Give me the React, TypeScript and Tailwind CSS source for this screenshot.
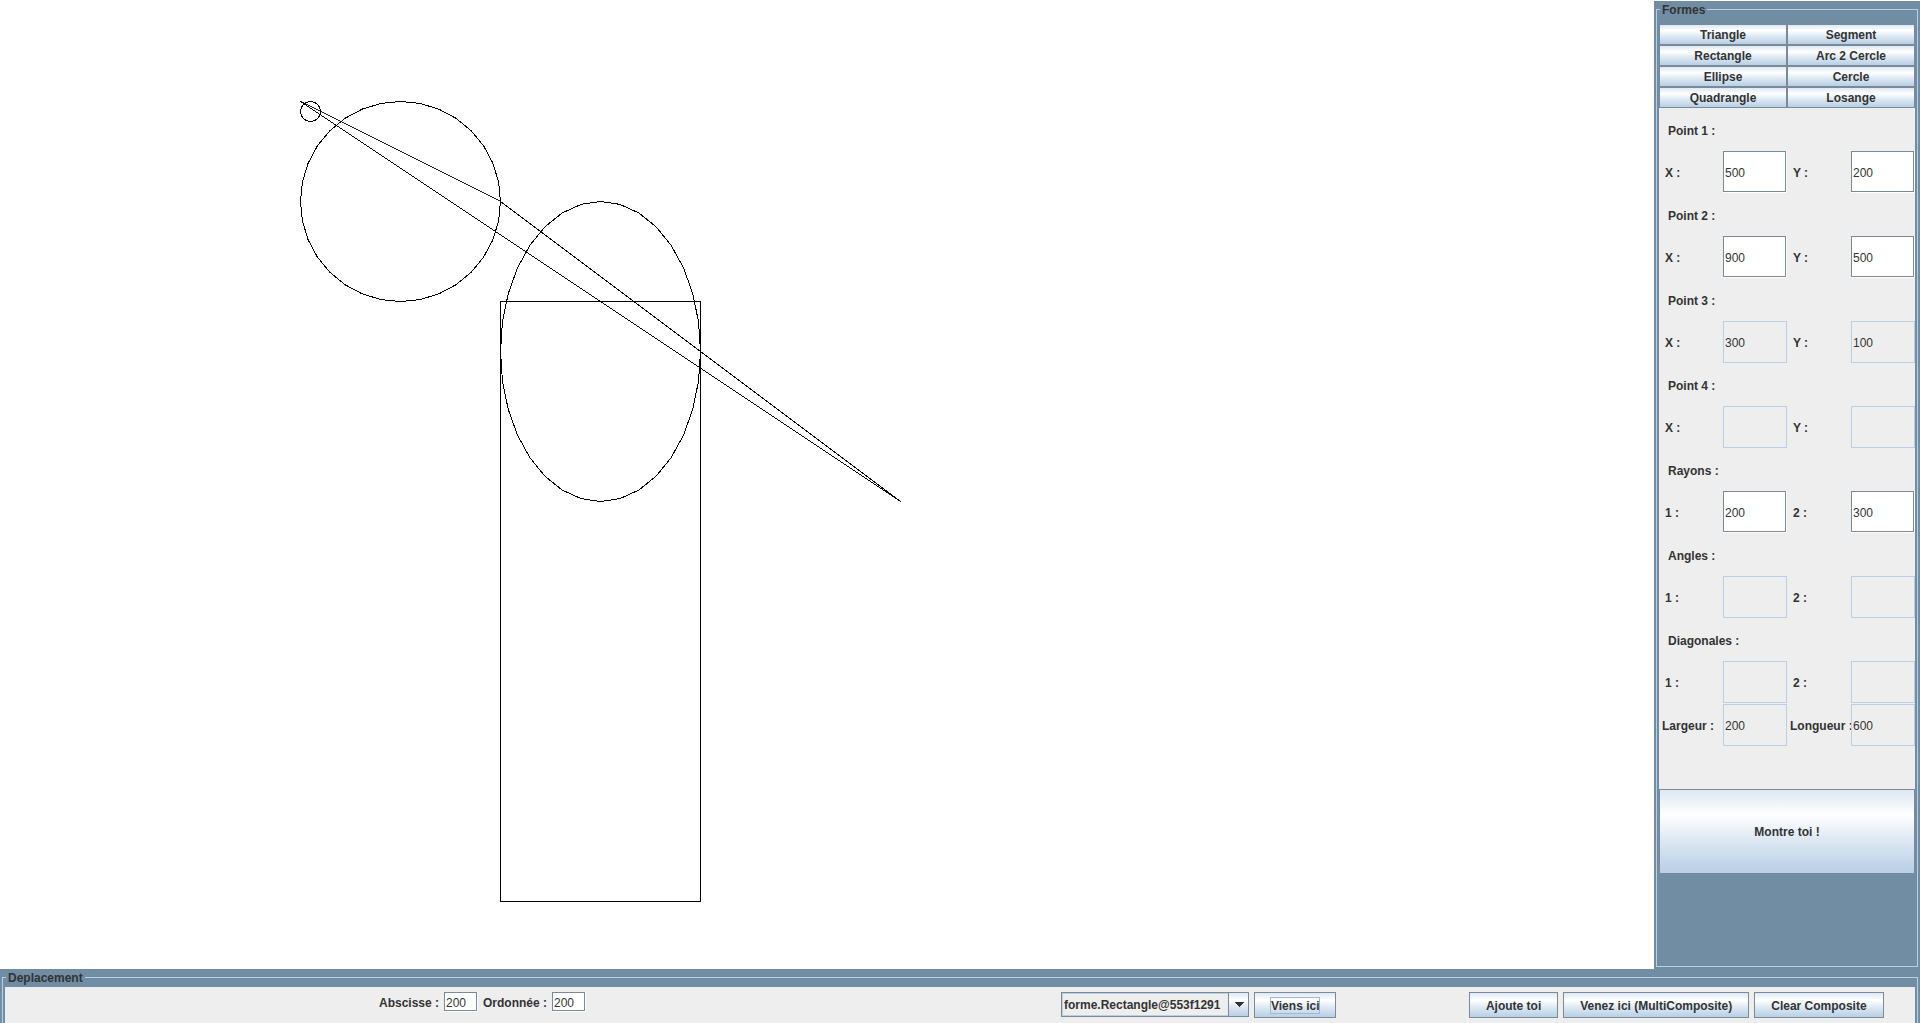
import { useId } from "react";
import type { ReactNode } from "react";

const METAL =
  "border border-[#7a8a99] bg-[linear-gradient(to_bottom,#dde8f3_0%,#ffffff_30%,#dde8f3_60%,#b8cfe5_100%)]";

const SHAPES = [
  "Triangle",
  "Segment",
  "Rectangle",
  "Arc 2 Cercle",
  "Ellipse",
  "Cercle",
  "Quadrangle",
  "Losange",
];

type FieldData = { label: string; value: string; disabled?: boolean };

const SECTIONS: { title: string; fields: FieldData[] }[] = [
  { title: "Point 1 :", fields: [{ label: "X :", value: "500" }, { label: "Y :", value: "200" }] },
  { title: "Point 2 :", fields: [{ label: "X :", value: "900" }, { label: "Y :", value: "500" }] },
  {
    title: "Point 3 :",
    fields: [
      { label: "X :", value: "300", disabled: true },
      { label: "Y :", value: "100", disabled: true },
    ],
  },
  {
    title: "Point 4 :",
    fields: [
      { label: "X :", value: "", disabled: true },
      { label: "Y :", value: "", disabled: true },
    ],
  },
  { title: "Rayons :", fields: [{ label: "1 :", value: "200" }, { label: "2 :", value: "300" }] },
  {
    title: "Angles :",
    fields: [
      { label: "1 :", value: "", disabled: true },
      { label: "2 :", value: "", disabled: true },
    ],
  },
  {
    title: "Diagonales :",
    fields: [
      { label: "1 :", value: "", disabled: true },
      { label: "2 :", value: "", disabled: true },
    ],
  },
];

// Flattens an ellipse into eight straight segments per quarter.
function ellipsePoints(x: number, y: number, w: number, h: number) {
  const steps = 32;
  return Array.from({ length: steps }, (_, i) => {
    const a = (i / steps) * Math.PI * 2;
    const px = x + w / 2 + (w / 2) * Math.cos(a);
    const py = y + h / 2 + (h / 2) * Math.sin(a);
    return `${px.toFixed(2)},${py.toFixed(2)}`;
  }).join(" ");
}

function TextBox({ id, value, disabled, size }: { id: string; value: string; disabled?: boolean; size: string }) {
  if (disabled) {
    return (
      <input
        id={id}
        type="text"
        disabled
        defaultValue={value}
        className={`${size} border border-[#b8cfe5] bg-transparent pt-[2px] pl-px text-[#333333]`}
      />
    );
  }
  return (
    <div className={`${size} flex border-r border-b border-white`}>
      <input
        id={id}
        type="text"
        defaultValue={value}
        className="w-full min-w-0 border border-[#7a8a99] bg-white pt-[2px] pl-px outline-none"
      />
    </div>
  );
}

function FieldRow({ fields, labelPad }: { fields: FieldData[]; labelPad: string }) {
  const base = useId();
  return (
    <div className="grid h-[42px] grid-cols-4 items-center">
      {fields.map((f, i) => (
        <div key={f.label} className="col-span-2 grid grid-cols-2 items-center">
          <label htmlFor={`${base}-${i}`} className={`${labelPad} pt-[2px] font-bold whitespace-nowrap`}>
            {f.label}
          </label>
          <TextBox id={`${base}-${i}`} value={f.value} disabled={f.disabled} size="h-[42px] w-full" />
        </div>
      ))}
    </div>
  );
}

function BarButton({ children, focused }: { children: ReactNode; focused?: boolean }) {
  return (
    <button type="button" className={`${METAL} flex h-[26px] items-center px-[15px] font-bold whitespace-nowrap`}>
      <span className={focused ? "border border-[#a3b8cc] pt-px" : "border border-transparent pt-px"}>
        {children}
      </span>
    </button>
  );
}

function Drawing() {
  return (
    <svg
      className="block h-full w-full"
      fill="none"
      stroke="#000000"
      strokeWidth="1"
      shapeRendering="crispEdges"
      role="img"
      aria-label="Dessin"
    >
      <g transform="translate(0.5 0.5)">
        <polygon points={ellipsePoints(300, 100, 200, 200)} />
        <ellipse cx="310" cy="110" rx="10" ry="10" />
        <polygon points={ellipsePoints(500, 200, 200, 300)} />
        <rect x="500" y="300" width="200" height="600" />
        <polyline points="500,200 900,500 300,100" />
        <line x1="300" y1="100" x2="500" y2="200" strokeWidth="0.88" />
      </g>
    </svg>
  );
}

function ShapePanel() {
  return (
    <aside className="flex w-[266px] shrink-0 flex-col bg-[#708da3] px-[2px] pb-[2px]">
      <fieldset className="flex-1 border border-[#b8cfe5] px-[2px] pt-[7px]">
        <legend className="ml-px px-[2px] pt-[2px] font-bold">Formes</legend>
        <div className="grid grid-cols-2">
          {SHAPES.map((s) => (
            <button key={s} type="button" className={`${METAL} h-[21px] font-bold`}>
              {s}
            </button>
          ))}
        </div>
        <div className="bg-[#eeeeee] pb-[43px]">
          {SECTIONS.map((s) => (
            <section key={s.title}>
              <h2 className="flex h-[43px] items-center pt-[2px] pl-[9px] font-bold">{s.title}</h2>
              <FieldRow fields={s.fields} labelPad="pl-[6px]" />
            </section>
          ))}
          <div className="pt-px">
            <FieldRow
              labelPad="pl-[3px]"
              fields={[
                { label: "Largeur :", value: "200", disabled: true },
                { label: "Longueur :", value: "600", disabled: true },
              ]}
            />
          </div>
        </div>
        <button type="button" className={`${METAL} h-[85px] w-full font-bold`}>
          Montre toi !
        </button>
      </fieldset>
    </aside>
  );
}

function MoveBar() {
  return (
    <footer className="shrink-0 bg-[#708da3] px-[2px]">
      <fieldset className="border border-b-0 border-[#b8cfe5] px-[2px] pt-[2px]">
        <legend className="ml-px px-[2px] pt-[2px] font-bold">Deplacement</legend>
        <div className="grid grid-cols-[2fr_1fr_1fr] items-start bg-[#eeeeee] py-[5px]">
          <div className="flex items-center justify-center gap-[5px]">
            <label htmlFor="abscisse" className="pt-[2px] font-bold">
              Abscisse :
            </label>
            <TextBox id="abscisse" value="200" size="h-5 w-[34px]" />
            <label htmlFor="ordonnee" className="pt-[2px] font-bold">
              Ordonnée :
            </label>
            <TextBox id="ordonnee" value="200" size="h-5 w-[34px]" />
          </div>
          <div className="flex items-start justify-center gap-[5px]">
            <div className="relative flex h-[25px] w-[188px] border border-[#7a8a99]">
              <select
                aria-label="Forme"
                className="w-full appearance-none border border-[#b8cfe5] bg-[#eeeeee] pr-5 pl-px font-bold outline-none"
              >
                <option>forme.Rectangle@553f1291</option>
              </select>
              <span className="pointer-events-none absolute inset-y-0 right-0 flex w-5 items-center justify-center border-l border-[#7a8a99] bg-[linear-gradient(to_bottom,#dde8f3_0%,#ffffff_30%,#dde8f3_60%,#b8cfe5_100%)]">
                <svg width="10" height="5" viewBox="0 0 10 5" shapeRendering="crispEdges" aria-hidden="true">
                  <path d="M0 0h10L5 5z" fill="#333333" />
                </svg>
              </span>
            </div>
            <BarButton focused>Viens ici</BarButton>
          </div>
          <div className="flex items-start justify-center gap-[5px]">
            <BarButton>Ajoute toi</BarButton>
            <BarButton>Venez ici (MultiComposite)</BarButton>
            <BarButton>Clear Composite</BarButton>
          </div>
        </div>
      </fieldset>
    </footer>
  );
}

export default function App() {
  return (
    <div className="flex h-screen flex-col overflow-hidden bg-white pt-px font-['Liberation_Sans',Arial,sans-serif] text-[12px] leading-[14px] text-[#333333]">
      <div className="flex min-h-0 flex-1">
        <main className="min-w-0 flex-1">
          <Drawing />
        </main>
        <ShapePanel />
      </div>
      <MoveBar />
    </div>
  );
}
